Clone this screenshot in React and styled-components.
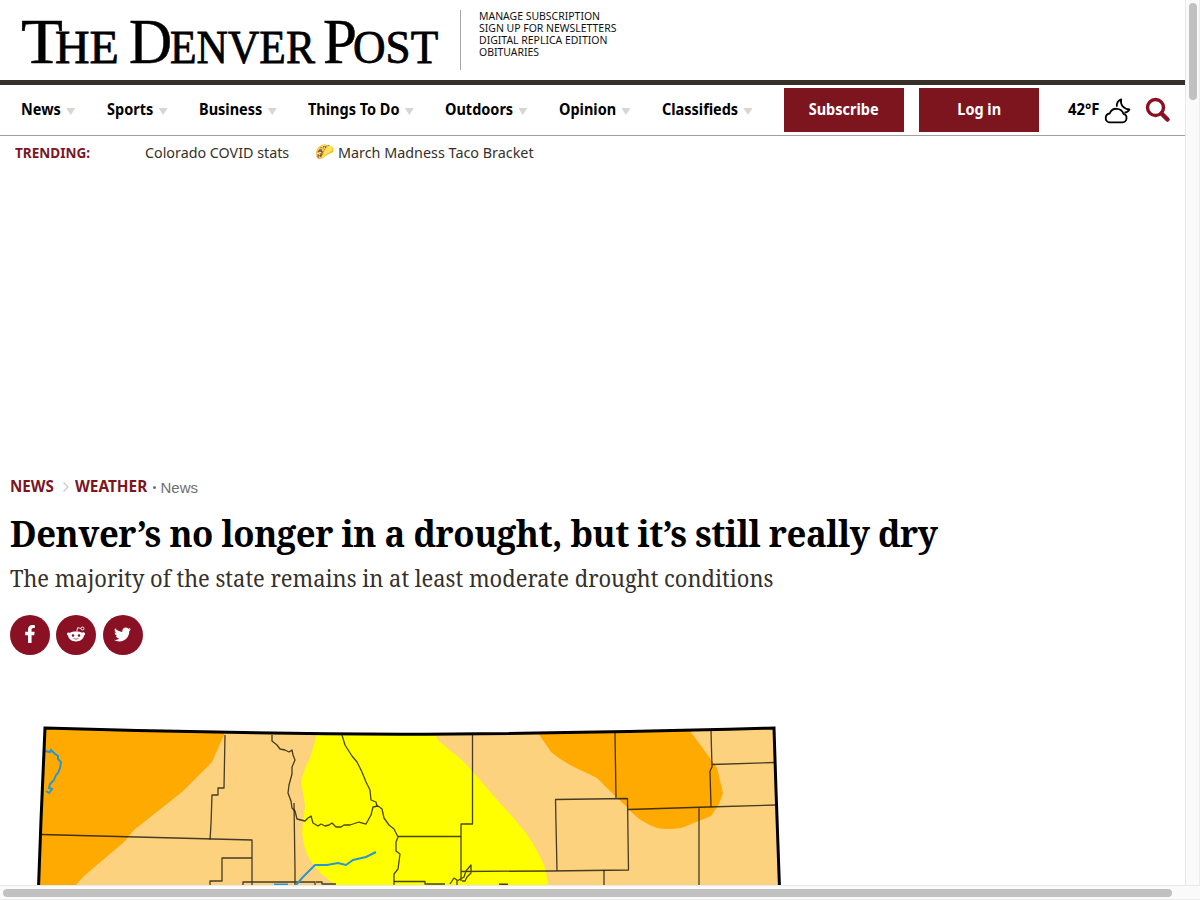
import React from 'react';
import styled, { createGlobalStyle } from 'styled-components';
import { FaFacebookF, FaTwitter } from 'react-icons/fa';

const sans = '"Noto Sans", "Liberation Sans", sans-serif';

const GlobalStyle = createGlobalStyle`
  * { box-sizing: border-box; }
  body { margin: 0; background: #fff; font-family: ${sans}; overflow: hidden; }
`;

const Window = styled.div`
  width: 1200px;
  height: 900px;
  display: grid;
  grid-template: 885px 15px / 1185px 15px;
`;
const Page = styled.div`
  overflow: hidden;
  display: flex;
  flex-direction: column;
`;
const VerticalTrack = styled.div`
  background: #fafafa;
  border-left: 1px solid #e8e8e8;
  border-right: 1px solid #ececec;
  padding: 3px;
`;
const HorizontalTrack = styled.div`
  grid-column: 1 / 3;
  background: #fafafa;
  border-top: 1px solid #e8e8e8;
  border-bottom: 1px solid #ececec;
  padding: 3px;
`;
const Thumb = styled.div`
  width: ${(p) => p.$w}px;
  height: ${(p) => p.$h}px;
  border-radius: 4px;
  background: #c1c1c1;
`;

const Condensed = styled.span`
  display: inline-block;
  white-space: nowrap;
  transform: scaleX(${(p) => p.$k});
  transform-origin: ${(p) => p.$origin || 'left'} center;
`;

const Header = styled.header`
  height: 85px;
  display: flex;
  border-bottom: 5px solid #35302a;
`;
const Logo = styled.div`
  width: 460px;
  padding: 10px 0 0 21px;
  display: flex;
  align-items: baseline;
  font-family: "Liberation Serif", serif;
  line-height: 63px;
  color: #000;
`;
const LogoPart = styled.span`
  width: ${(p) => p.$w}px;
  font-size: ${(p) => (p.$cap ? 63.5 : 47)}px;
  -webkit-text-stroke: ${(p) => (p.$cap ? 0.5 : 0.8)}px #000;
`;
const HeaderLinks = styled.nav`
  margin-top: 10px;
  height: 60px;
  padding-left: 18px;
  border-left: 1px solid #a5a5a5;
  display: flex;
  flex-direction: column;
  font-size: 11px;
  line-height: 12px;
  color: #111;
`;

const NavBar = styled.nav`
  height: 51px;
  padding-left: 21px;
  display: flex;
  align-items: center;
  border-bottom: 1px solid #a0a0a0;
  font-weight: 700;
  font-size: 16px;
  color: #000;
`;
const NavItem = styled.div`
  width: ${(p) => p.$w}px;
  padding-bottom: 2px;
  white-space: nowrap;
`;
const Arrow = styled.i`
  display: inline-block;
  margin-left: 6px;
  border: 5.5px solid transparent;
  border-top: 7px solid #d8d6d2;
  border-bottom: 0;
`;
const Button = styled.button`
  width: 120px;
  height: 44px;
  margin: 0 15px 0 0;
  padding: 0 0 2px;
  border: 0;
  background: #7d151f;
  color: #fff;
  font: 700 16px ${sans};
`;
const Weather = styled.div`
  margin-left: 14px;
  width: 77px;
  display: flex;
  align-items: center;
  svg { flex: none; margin: 2px 0 0; }
`;
const Temperature = styled.div`
  width: 34.5px;
  padding-bottom: 2px;
  white-space: nowrap;
`;

const Trending = styled.div`
  height: 34px;
  padding: 0 0 2px 15px;
  display: flex;
  align-items: center;
  font-size: 15px;
  color: #35302a;
`;
const TrendingLabel = styled.div`
  width: 130px;
  font-size: 14px;
  font-weight: 700;
  color: #7d151f;
`;
const TrendingLink = styled.div`
  width: ${(p) => p.$w}px;
  white-space: nowrap;
`;
const Taco = styled.span`
  width: 22.5px;
  font-family: "Noto Color Emoji", sans-serif;
  font-size: 15.5px;
`;

const Article = styled.main`
  margin-top: 305px;
  padding-left: 10px;
`;
const Crumbs = styled.div`
  height: 24px;
  padding-bottom: 1px;
  display: flex;
  align-items: center;
  font-size: 16px;
  font-weight: 700;
  color: #7d151f;
`;
const Crumb = styled.span`
  width: ${(p) => p.$w}px;
  margin-top: -1px;
`;
const CrumbArrow = styled.svg`
  margin: 1px 5px 0 7px;
`;
const CrumbTag = styled.span`
  margin: 1px 0 0 4px;
  display: flex;
  gap: 5px;
  font: 400 15px "Liberation Sans", sans-serif;
  color: #6f6f6f;
`;
const Dot = styled.i`
  width: 3px;
  height: 3px;
  margin: 7px 0 0 1px;
  border-radius: 50%;
  background: #6f6f6f;
`;
const Headline = styled.h1`
  margin: 10px 0 0;
  height: 49px;
  font: 700 36px/49px "Noto Serif", serif;
  letter-spacing: -0.5px;
  color: #000;
`;
const Subhead = styled.h2`
  margin: 4px 0 0;
  height: 32px;
  font: 400 23px/32px "Noto Serif", serif;
  color: #35302a;
`;
const Share = styled.div`
  margin-top: 21px;
  display: flex;
`;
const ShareButton = styled.div`
  width: 40px;
  height: 40px;
  margin-right: ${(p) => p.$gap}px;
  border-radius: 50%;
  background: #8a1023;
  color: #fff;
  display: flex;
  align-items: center;
  justify-content: center;
  svg { margin: 0 1px 2px 0; }
`;
const MapImage = styled.svg`
  display: block;
  margin: 55px 0 0 -10px;
`;

const sections = [
  ['News', 85.5], ['Sports', 92], ['Business', 109.5], ['Things To Do', 136.5],
  ['Outdoors', 114], ['Opinion', 103], ['Classifieds', 122.5],
];
const links = ['MANAGE SUBSCRIPTION', 'SIGN UP FOR NEWSLETTERS', 'DIGITAL REPLICA EDITION', 'OBITUARIES'];
const logo = [
  ['T', 33.5, true, 1.08], ['HE', 74.5, false, 1.02], ['D', 41, true, 0.94],
  ['ENVER', 153, false, 0.925], ['P', 30, true, 0.96], ['OST', 90, false, 0.96],
];

function RedditIcon() {
  return (
    <svg width="20" height="18" viewBox="0 0 20 18">
      <path fill="#fff" fillRule="evenodd" d="M10 6.500c2.600 0 4.800.5 6.300 1.300 1.300-1.100 3.300.1 2.700 1.700-.1.500-.5.900-1 1.100C17.700 14 14.300 16.500 10 16.500S2.300 14 2 10.600C.3 9.900.6 7.800 2.200 7.500c.6-.1 1.100.1 1.500.4C5.200 7 7.400 6.500 10 6.500zM7 9.200a1.300 1.300 0 100 2.600 1.300 1.300 0 000-2.600zm6 0a1.300 1.300 0 100 2.600 1.300 1.300 0 000-2.600zM6.500 13.100c1.700 1.900 5.300 1.900 7 0-1.800.7-5.200.7-7 0z" />
      <path fill="none" stroke="#fff" strokeWidth=".9" d="M10.800 6.500l.8-3.800 3.300.7" />
      <circle cx="16.500" cy="3.500" r="1.500" fill="none" stroke="#fff" strokeWidth=".9" />
    </svg>
  );
}

function DroughtMap() {
  return (
    <MapImage width="800" height="175" viewBox="0 710 800 175">
      <defs>
        <clipPath id="state"><path d="M45 728Q200 734 400 735Q600 734 774 728L780 890H38Z" /></clipPath>
      </defs>
      <g clipPath="url(#state)">
        <path fill="#fcd27f" d="M30 720h760v170H30z" />
        <path fill="#ffaa00" d="M30 720H228L224 735L212 762L182 792L134 830L124 842L84 876L74 887H30z" />
        <path fill="#ffff00" d="M320 725L316 737L310 758Q303 772 301 781L305 805L302 832Q304 850 309 858Q316 870 324 876L342 890H549Q546 870 543 863Q533 842 525 832Q515 819 500 803L473 772Q463 760 452 752L438 740L432 725z" />
        <path fill="#ffaa00" d="M534 725L540 736L551 752Q560 760 574 767L597 778L610 791L628 808Q636 818 646 823Q656 829 666 829Q678 829 684 827L711 816L719 804L723 793L717 768L710 758L690 731V720z" />
      </g>
      <g fill="none" stroke="#000" strokeOpacity=".72" strokeWidth="1.300" strokeLinejoin="round">
        <path d="M41 834.500L252 840V885M225 735L224 788H218V795H212L211 824L210 840M252 858H222V881H210V888M243 888V882H315V885M294 803L295 870V888M316 882H322V884H336" />
        <path d="M272 735L272 741L277 745L280 749L285 750L289 752L292 750L293 755L295 760L292 767L292 774L289 785L288 793L291 801L292 808L295 811L297 819L305 821L308 818L311 816L313 823L318 826L321 824L325 826L329 825L332 823L336 827L341 827L344 825L350 825L359 822L366 824L371 815L373 807L378 806L382 809L384 818L389 825L394 829L398 837L396 842V851L400 854L398 869L394 874V888" />
        <path d="M342 735L345 745L352 756L357 762L362 772L366 782L370 790L371 800L376 802L377 806M398 836.500H461M472.500 735V824H461V881M461 871.500L550 871L628.500 870L627.500 798.500L555.500 799.500L557 871M394 881.500H425V884H445M457 887V880L454 878L450 884M457 881L464 877L466 871L471 865V873L467 877L465 881L462 881" />
        <path d="M615 733L616 798M628 809.500L708 807L776 805M711 731L712 767L710 771L711 807M712 764.500L774 762.500M699 807L699 885M604 870V888" />
        <path strokeWidth="2" d="M499 884.500h9" />
      </g>
      <path fill="none" stroke="#2a96cf" strokeWidth="2" d="M45 751L50 752L51 750L55 754L58 756L58 759L61 762L60 768L58 773L56 775L54 780L50 784L49 788L52 789L49 793L46 791M296 885L303 877L315 865L327 865L338 863L346 865L353 860L366 857L372 854L376 852" />
      <path stroke="#2a96cf" strokeWidth="3" d="M274 885h14" />
      <path fill="none" stroke="#000" strokeWidth="3" d="M38.500 888L41 820L45 728Q220 733.500 400 734.200Q550 734 774 728L776 790L779.500 888" />
    </MapImage>
  );
}

export default function App() {
  return (
    <>
      <GlobalStyle />
      <Window>
        <Page>
          <Header>
            <Logo>
              {logo.map(([t, w, cap, k]) => (
                <LogoPart key={t} $w={w} $cap={cap}><Condensed $k={k}>{t}</Condensed></LogoPart>
              ))}
            </Logo>
            <HeaderLinks>
              {links.map((l) => <Condensed key={l} $k={0.95}>{l}</Condensed>)}
            </HeaderLinks>
          </Header>
          <NavBar>
            {sections.map(([s, w]) => (
              <NavItem key={s} $w={w}><Condensed $k={0.905}>{s}<Arrow /></Condensed></NavItem>
            ))}
            <Button><Condensed $k={0.905} $origin="center">Subscribe</Condensed></Button>
            <Button><Condensed $k={0.905} $origin="center">Log in</Condensed></Button>
            <Weather>
              <Temperature><Condensed $k={0.93}>42°F</Condensed></Temperature>
              <svg width="28" height="28" viewBox="0 0 28 28" fill="none" stroke="#000" strokeWidth="1.800" strokeLinejoin="round">
                <path d="M6 25.300h13.500a4.300 4.300 0 001-8.400 7.300 7.300 0 00-13.800-.4A4.500 4.500 0 006 25.300z" />
                <path d="M13.800 9.600C13.600 6 15.500 3.200 18.200 2.300c-1.100 5 1.600 9.500 8.200 10.200-1 1.800-3 3-5 3.100" />
              </svg>
            </Weather>
            <svg width="26" height="26" viewBox="0 0 26 26" fill="none" stroke="#8a1023">
              <circle cx="10.500" cy="10.500" r="8" strokeWidth="3.400" />
              <path d="M16.500 16.500L22.500 22.500" strokeWidth="4.500" strokeLinecap="round" />
            </svg>
          </NavBar>
          <Trending>
            <TrendingLabel><Condensed $k={0.967}>TRENDING:</Condensed></TrendingLabel>
            <TrendingLink $w={170}><Condensed $k={0.953}>Colorado COVID stats</Condensed></TrendingLink>
            <Taco>🌮</Taco>
            <TrendingLink $w={220}><Condensed $k={0.957}>March Madness Taco Bracket</Condensed></TrendingLink>
          </Trending>
          <Article>
            <Crumbs>
              <Crumb $w={44.5}><Condensed $k={0.95}>NEWS</Condensed></Crumb>
              <CrumbArrow width="8" height="12" viewBox="0 0 8 12" fill="none" stroke="#ccc" strokeWidth="1.300"><path d="M1.500 1.500L6 6L1.500 10.500" /></CrumbArrow>
              <Crumb $w={73}><Condensed $k={0.96}>WEATHER</Condensed></Crumb>
              <CrumbTag><Dot />News</CrumbTag>
            </Crumbs>
            <Headline><Condensed $k={0.966}>Denver’s no longer in a drought, but it’s still really dry</Condensed></Headline>
            <Subhead><Condensed $k={0.952}>The majority of the state remains in at least moderate drought conditions</Condensed></Subhead>
            <Share>
              <ShareButton $gap={6}><FaFacebookF size={18} /></ShareButton>
              <ShareButton $gap={7}><RedditIcon /></ShareButton>
              <ShareButton $gap={0}><FaTwitter size={17} /></ShareButton>
            </Share>
            <DroughtMap />
          </Article>
        </Page>
        <VerticalTrack><Thumb $w={8} $h={97} /></VerticalTrack>
        <HorizontalTrack><Thumb $w={1169} $h={8} /></HorizontalTrack>
      </Window>
    </>
  );
}
